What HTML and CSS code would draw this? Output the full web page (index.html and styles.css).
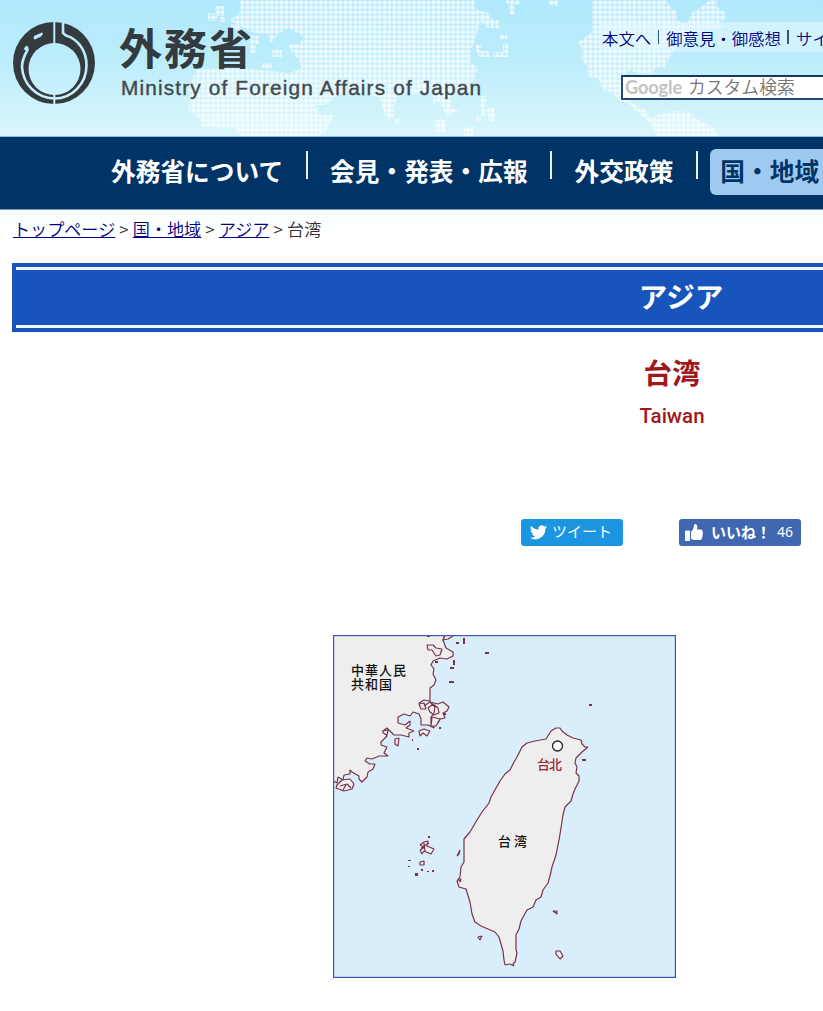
FILE: index.html
```html
<!DOCTYPE html>
<html lang="ja">
<head>
<meta charset="utf-8">
<title>台湾 | 外務省</title>
<link rel="stylesheet" href="styles.css">
</head>
<body>
<header class="site-header">
  <svg class="world" viewBox="0 0 823 136" aria-hidden="true">
    <defs>
      <pattern id="dots" width="4.9" height="4.9" patternUnits="userSpaceOnUse"><rect x=".4" y=".5" width="4" height="4" rx="1.4" fill="#fff"/></pattern>
    </defs>
    <g fill="url(#dots)" opacity=".8">
      <path d="M240 0H475L474 8L488 13L494 22L488 28L480 22L475 40L471 50L471 62L478 70L472 83H468L476 95L451 94V106L458 111L446 116L440 101L433 105V93L398 94L394 106V119L386 117L379 97L358 93L337 95L325 105H315L319 115H334L328 128L319 136H241L234 128L202 127L200 119L188 109L191 98L188 90L196 70L230 67L250 69L290 73L302 68L297 58L287 45L300 43L304 37L289 28L279 33L271 43L267 34L250 32L229 20L239 14Z"/>
      <path d="M250 36h9v8h-9zM272 50h10v7h-10zM262 63h10v6h-10zM250 45h6v8h-6zM208 13h9v8h-9zM215 6h9v10h-9zM220 17h5v5h-5zM231 24h9v6h-9zM505 0h15v5h-5v10h-6V6zM490 20h9v8h-9zM499 35h8v5h-8zM503 43h5v14h-15v-5h10zM475 45h6v6h8v6h-10zM481 96h5v20h-5zM487 108h8v14h-6zM435 120h10v13h-10zM464 127h9v9h-9zM476 116h5v5h-5zM395 119h4v5h-4zM548 0h10v6h-8z"/>
      <path d="M592 0H666L672 9L677 12V20L687 25L691 13L698 9L710 0H717V7L726 13V18L719 24L726 27L704 30L694 40L679 44L669 58L665 67H658L652 72H654V80L645 78L631 70L624 75V95L635 105L646 110L649 118L671 111L689 112L695 118L716 129L718 136H657L651 124L640 114L628 103L618 100L612 92L603 90L599 80L587 75V66L581 59L583 49L578 43L592 32Z"/>
    </g>
  </svg>
  <svg class="brand" viewBox="0 0 482 104" role="img" aria-label="外務省 Ministry of Foreign Affairs of Japan">
    <mask id="emblem" maskUnits="userSpaceOnUse" x="10" y="20" width="90" height="86">
      <circle cx="54" cy="63" r="41" fill="#fff"/>
      <circle cx="54.500" cy="69" r="26" fill="#000"/>
      <path d="M25 50Q27 44 27.500 50C24 56 22 60 22 67C23 84 36 98 54.500 98.500C72 98.500 86.500 84 86.500 65C86.500 51 78 39 66 35.500L63 33V21" fill="none" stroke="#000" stroke-width="2.600"/>
      <path d="M34 36L42 32.500Q44 34 41 36.500L35 39.500Q33 39 34 36Z" fill="#000"/>
      <path d="M54.300 20V105" stroke="#000" stroke-width="2"/>
    </mask>
    <rect x="10" y="20" width="90" height="86" fill="#343b3e" mask="url(#emblem)"/>
    <text class="brand-ja" x="119" y="65" textLength="133">外務省</text>
    <text class="brand-en" x="121" y="94.500" textLength="360">Ministry of Foreign Affairs of Japan</text>
  </svg>
  <div class="tools">
    <ul class="utility">
      <li><a href="#">本文へ</a></li>
      <li><a href="#">御意見・御感想</a></li>
      <li><a href="#">サイトマップ</a></li>
    </ul>
    <div class="search"><span class="google">Google</span><span>カスタム検索</span></div>
  </div>
</header>
<nav class="global-nav">
  <a href="#">外務省について</a><i></i><a href="#">会見・発表・広報</a><i></i><a href="#">外交政策</a><i></i><a class="active" href="#">国・地域</a>
</nav>
<main class="content">
  <div class="breadcrumb"><a href="#">トップページ</a> &gt; <a href="#">国・地域</a> &gt; <a href="#">アジア</a> &gt; <span>台湾</span></div>
  <div class="region-title"><div>アジア</div></div>
  <h1>台湾</h1>
  <h2>Taiwan</h2>
  <div class="social">
    <a class="tweet" href="#"><svg viewBox="0 0 24 20"><path fill="#fff" d="M24 2.400a10 10 0 0 1-2.800.8A5 5 0 0 0 23.300.4a10 10 0 0 1-3.100 1.200A4.900 4.900 0 0 0 11.800 6 14 14 0 0 1 1.700.9a4.900 4.900 0 0 0 1.500 6.600A5 5 0 0 1 1 6.900a5 5 0 0 0 3.900 4.900 5 5 0 0 1-2.200.1 4.900 4.900 0 0 0 4.600 3.400A10 10 0 0 1 0 17.400 14 14 0 0 0 21.500 4.900 10 10 0 0 0 24 2.400Z"/></svg>ツイート</a>
    <a class="like" href="#"><svg viewBox="0 0 18 17"><path fill="#fff" d="M0 7.500Q0 6.500 1 6.500H4Q5 6.500 5 7.500V16Q5 17 4 17H1Q0 17 0 16ZM6 8Q9 5 9 1.500Q9 0 10.500 0Q13 .5 12 5.500H16Q18 6 17.500 8Q18.500 9.500 17.500 11Q18 12.500 17 13.500Q17 16 14.500 16H9L6 15Z"/></svg><b>いいね！</b><span>46</span></a>
  </div>
  <svg class="map" viewBox="333 635 343 343" role="img" aria-label="台湾の地図">
    <rect x="333" y="635" width="343" height="343" fill="#daedfb"/>
    <g class="coast" fill="#eee" stroke="#78334b" stroke-width="1.200" stroke-linejoin="bevel">
      <path d="M332 634H445L443 640L446 648L453 652L453 656L447 659L440 658L433 661L431 665L434 669L433 674L436 680L434 685L430 688V701L424 700L419 703L422 708L427 704L430 702L438 704L443 702L449 707L447 711L443 713L445 718L440 719L438 723L434 722V728L428 725L421 725V719L419 714L413 712L410 716L404 714L398 717L398 723L405 725L410 721L410 725L406 728L414 731L409 733L409 737L401 735L394 735L387 728L383 731L387 736L381 742V745L387 747L384 753L388 756L379 756L372 759L367 758L365 761L370 764L375 764L373 769L368 772L367 777L362 782L359 779L359 776L352 772L350 770L350 774L344 775L343 780L338 777L337 783L332 780Z"/>
      <path d="M427 645L433 645L436 648L442 649L440 655L436 656L432 650L428 650ZM445 636L443 640L448 639L453 636M428 708L433 704L438 708L439 713L434 715L430 712ZM419 704L424 703L426 709L421 709ZM430 702L435 707L434 713L431 717V725M432 717L440 719L436 726H431ZM419 731L424 729L430 731L427 736L423 733L420 736ZM395 739L399 738L398 746L395 744ZM383 731L388 730L387 735L383 733ZM337 785L342 780L350 779L354 784L352 789L344 791L336 788ZM340 786L347 784L351 788M343 790L346 785"/>
      <path d="M500 781L505 774L510 770L514 762L517 757L522 747L527 743L535 741L546 739L551 731L556 728L560 728L562 731L567 735L573 738L581 740L582 744L585 747H588L582 752L576 758L575 763L577 767L576 773L579 776L579 781L577 785L575 789L573 794L571 801L568 804L565 807L563 815L561 828L559 840L556 855L552 867L550 876L548 883L543 890L541 897L536 900L533 907L527 910L521 921L519 929L516 935V950L517 953L515 962L513 964L514 966L510 964L505 965L504 960L503 951L501 944L499 937L495 932L488 929L481 926L475 922L472 914L470 902L466 889L459 887L457 881L460 877L461 867L464 862V839L470 832L477 820L482 812L489 803L491 797Z"/>
      <path d="M420 845L424 842L428 841L427 846L434 849L431 854L424 851L422 854L420 850L425 847ZM421 848L429 843M424 843L425 851M420 862L424 861L424 865L420 865ZM457 856L460 850L459 854ZM553 911H557V914ZM556 951L560 951L563 956L560 959L556 954ZM478 937L482 936L480 940ZM458 879L461 879L460 882Z"/>
    </g>
    <path fill="#78334b" d="M428 836h2v2h-2zM408 860h3v1h-3zM408 866h2v1h-2zM415 873h3v3h-3zM421 869h2v2h-2zM427 871h2v1h-2zM432 870h2v2h-2zM582 759h4v2h-4zM589 704h3v2h-3zM485 652h4v2h-4zM449 681h5v2h-5zM450 667h4v2h-4zM453 660h2v5h-2zM435 661h3v2h-3zM463 638h2v6h-2zM456 642h3v2h-3zM439 727h2v2h-2zM443 713h3v2h-3zM417 748h2v2h-2zM412 739h1v2h-1zM427 636h3v1h-3z"/>
    <circle cx="557.500" cy="746" r="5" fill="#fff" stroke="#222" stroke-width="1.300"/>
    <g class="map-labels"><text x="351" y="675" textLength="55">中華人民</text><text x="351" y="689" textLength="41">共和国</text><text x="498" y="846" textLength="29">台湾</text><text class="city" x="537" y="769" textLength="25">台北</text></g>
    <rect x="333.500" y="635.500" width="342" height="342" fill="none" stroke="#4058b4" stroke-width="1.400"/>
  </svg>
</main>
</body>
</html>
```
FILE: styles.css
```css
* { box-sizing: border-box; }
html { overflow: hidden; }
body {
  margin: 0;
  width: 823px;
  height: 1011px;
  overflow: hidden;
  background: #fff;
  color: #333;
  font-family: "Noto Sans CJK JP", "Noto Sans", sans-serif;
}
a { color: #000080; }

.site-header {
  position: relative;
  display: flex;
  justify-content: space-between;
  height: 137px;
  overflow: hidden;
  background: linear-gradient(#b0e8fd, #bdedfb 45%, #dbf6fc);
  border-bottom: 1px solid #8bc4e8;
}
.world { position: absolute; inset: 0; width: 823px; height: 136px; }
.brand { position: relative; flex: none; width: 482px; height: 104px; }
.brand-ja { fill: #343b3e; font-size: 43px; font-weight: 700; }
.brand-en { fill: #414a4e; font-family: "Liberation Sans", Arial, sans-serif; font-size: 20.800px; stroke: #414a4e; stroke-width: .4px; }

.tools { position: relative; flex: none; width: 223px; padding-top: 22px; }
.utility {
  display: flex;
  width: 360px;
  height: 30px;
  margin: 0;
  padding: 0 0 0 2px;
  list-style: none;
  background: rgba(230, 250, 253, .55);
  font-size: 16.400px;
  font-weight: 350;
  line-height: 33px;
}
.utility li { display: flex; flex: none; }
.utility li + li::before { content: ""; width: 1.500px; height: 14px; margin: 8px 7px 0 6.500px; background: #315c77; }
.utility a { text-decoration: none; }
.search {
  display: flex;
  width: 340px;
  height: 25px;
  margin: 23px 0 0 21px;
  padding-left: 2px;
  gap: 5px;
  border: 2px solid #24477a;
  border-top-color: #163764;
  background: #fff;
  color: #757575;
  font-size: 17.800px;
  font-weight: 350;
  line-height: 19px;
}
.google { width: 58px; font: 700 18.200px/20px Lato, sans-serif; color: #c2c2c2; letter-spacing: -.1px; }

.global-nav {
  display: flex;
  height: 73px;
  padding: 12px 0 0 111px;
  background: #036;
  border-bottom: 1px solid #7199b8;
  font-size: 24.700px;
  font-weight: 700;
  line-height: 43px;
  white-space: nowrap;
}
.global-nav a { flex: none; color: #fff; text-decoration: none; }
.global-nav i { flex: none; width: 2px; height: 28px; margin: 2px 22.500px 0; background: #e9eff5; }
.global-nav .active { width: 160px; height: 46px; margin-left: -10px; padding-left: 10px; border-radius: 6px; background: #a0c9ef; color: #036; }

.content { width: 1362px; padding: 0 12px; background: linear-gradient(#fafeff, #fff 25px); }
.breadcrumb { height: 53px; padding-left: 1px; font-size: 17.100px; font-weight: 350; line-height: 38px; white-space: nowrap; word-spacing: .3px; }
.region-title { height: 69px; padding: 4px; background: #1755bc; color: #fff; font-size: 28.500px; font-weight: 700; text-align: center; }
.region-title div { height: 61px; border: solid #f1f6fc; border-width: 3px 0; line-height: 52px; }
h1, h2 { margin: 0; padding-right: 18px; color: #a0181c; text-align: center; }
h1 { height: 64px; padding-top: 19px; font-size: 28.500px; line-height: 42px; }
h2 { height: 123px; font-family: Roboto, sans-serif; font-size: 20.500px; font-weight: 500; line-height: 40px; }
.social { display: flex; gap: 56px; padding-left: 509px; color: #fff; }
.social a { display: flex; height: 27px; border-radius: 3px; color: #fff; text-decoration: none; }
.tweet { width: 102px; padding-left: 9px; gap: 5px; background: #1b95e0; font-size: 15px; line-height: 23px; }
.tweet svg { width: 17px; height: 15px; margin-top: 6px; }
.like { width: 122px; padding-left: 6px; background: #4267b2; font-size: 15px; line-height: 26px; }
.like svg { width: 18px; height: 17px; margin: 5px 8px 0 0; }
.like span { margin-left: 6px; font-family: "Noto Sans", sans-serif; font-size: 14px; }
.map { display: block; width: 343px; height: 343px; margin: 89px 0 0 321px; }
.map-labels { font-size: 13px; font-weight: 500; fill: #111; }
.map-labels .city { fill: #9b2935; }
```
